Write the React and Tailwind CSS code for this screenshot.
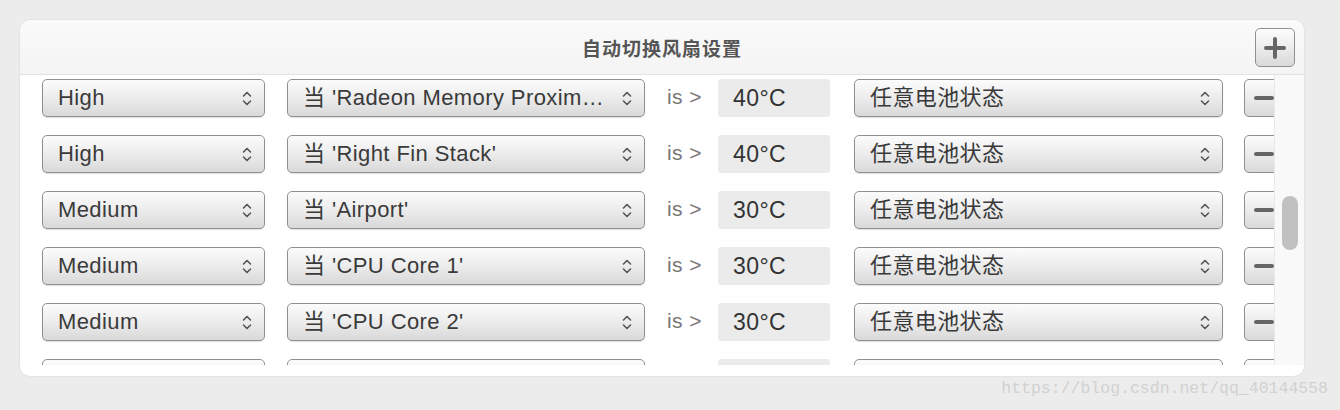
import React from "react";

const font = { fontFamily: '"Liberation Sans", "Noto Sans CJK SC", sans-serif' };

const rows = [
  { speed: "High", sensor: "当 'Radeon Memory Proxim…", temp: "40°C", battery: "任意电池状态" },
  { speed: "High", sensor: "当 'Right Fin Stack'", temp: "40°C", battery: "任意电池状态" },
  { speed: "Medium", sensor: "当 'Airport'", temp: "30°C", battery: "任意电池状态" },
  { speed: "Medium", sensor: "当 'CPU Core 1'", temp: "30°C", battery: "任意电池状态" },
  { speed: "Medium", sensor: "当 'CPU Core 2'", temp: "30°C", battery: "任意电池状态" },
  // last row is scrolled out of view, only its top edge shows
  { speed: "", sensor: "", temp: "", battery: "", hidden: true },
];

function Chevrons() {
  return (
    <svg width="10" height="17" viewBox="0 0 10 17" className="shrink-0">
      <path d="M1.5 6 L5 2.5 L8.5 6" fill="none" stroke="#555" strokeWidth="1.6" strokeLinecap="round" strokeLinejoin="round" />
      <path d="M1.5 11 L5 14.5 L8.5 11" fill="none" stroke="#555" strokeWidth="1.6" strokeLinecap="round" strokeLinejoin="round" />
    </svg>
  );
}

function Select({ width, children }) {
  return (
    <div
      className={`${width} h-[38px] shrink-0 flex items-center justify-between pl-[15px] pr-[12px] rounded-[5px] border border-[#8f8f8f] bg-gradient-to-b from-[#fcfcfc] via-[#ececec] to-[#d9d9d9] shadow-[0_1px_1px_rgba(0,0,0,0.12)]`}
    >
      <span className="truncate text-[22px] tracking-[0.4px] leading-[30px] text-[#3a3a3a] pr-2">{children}</span>
      <Chevrons />
    </div>
  );
}

function Row({ row }) {
  return (
    <div className="flex items-center h-[56px] pl-[22px] shrink-0">
      <Select width="w-[223px]">{row.speed}</Select>
      <div className="ml-[22px]">
        <Select width="w-[358px]">{row.sensor}</Select>
      </div>
      <div className="w-[73px] shrink-0 pl-[22px] text-[21px] tracking-[0.4px] text-[#777] leading-[26px] -mt-[2px]">
        {row.hidden ? "" : "is >"}
      </div>
      <div className="w-[112px] h-[38px] shrink-0 flex items-center pl-[15px] rounded-[3px] bg-[#ebebeb] text-[23px] tracking-[0.4px] text-[#333] leading-[30px]">
        {row.temp}
      </div>
      <div className="ml-[24px]">
        <Select width="w-[369px]">{row.battery}</Select>
      </div>
      <div className="ml-[21px] w-[40px] h-[38px] shrink-0 flex items-center justify-center rounded-[5px] border border-[#8f8f8f] bg-gradient-to-b from-[#fcfcfc] via-[#ececec] to-[#d9d9d9]">
        <div className="w-[20px] h-[4px] rounded-full bg-[#666]" />
      </div>
    </div>
  );
}

export default function App() {
  return (
    <div className="w-[1340px] h-[410px] bg-[#ececec] pt-[20px] pl-[20px] overflow-hidden" style={font}>
      <div className="w-[1284px] h-[356px] bg-white rounded-[10px] shadow-[0_0_2px_rgba(0,0,0,0.12)] flex flex-col overflow-hidden">
        <div className="h-[55px] shrink-0 relative flex items-center justify-center pt-[6px] bg-gradient-to-b from-[#fafafa] to-[#f4f4f4] border-b border-[#e2e2e2]">
          <span className="text-[19px] font-bold text-[#555] tracking-[1px]">自动切换风扇设置</span>
          <div className="absolute right-[9px] top-[8px] w-[40px] h-[39px] flex items-center justify-center rounded-[5px] border border-[#8f8f8f] bg-gradient-to-b from-[#fcfcfc] via-[#ececec] to-[#d9d9d9]">
            <svg width="22" height="22" viewBox="0 0 22 22">
              <path d="M11 2 V20 M2 11 H20" stroke="#666" strokeWidth="4" strokeLinecap="round" />
            </svg>
          </div>
        </div>
        <div className="h-[290px] flex shrink-0">
          <div className="w-[1254px] overflow-hidden flex flex-col">
            <div className="-mt-[5px] flex flex-col">
              {rows.map((r, i) => (
                <Row key={i} row={r} />
              ))}
            </div>
          </div>
          <div className="w-[30px] shrink-0 bg-[#f9f9f9] border-l border-[#e8e8e8] flex justify-center pt-[121px]">
            <div className="w-[16px] h-[54px] rounded-full bg-[#c1c1c1]" />
          </div>
        </div>
      </div>
      <div className="w-[1308px] text-right text-[16.5px] leading-[20px] text-[#d2d2d2] mt-[3px]" style={{ fontFamily: '"Liberation Mono", monospace' }}>
        https://blog.csdn.net/qq_40144558
      </div>
    </div>
  );
}
